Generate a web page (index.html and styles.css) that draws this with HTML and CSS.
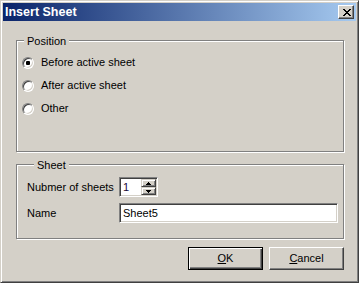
FILE: index.html
```html
<!DOCTYPE html>
<html lang="en">
<head>
    <meta charset="UTF-8">
    <title>Insert Sheet</title>
    <link rel="stylesheet" href="styles.css">
</head>
<body>
    <div class="window">
        <div class="titlebar">
            <span class="title">Insert Sheet</span>
            <span class="close-btn">
                <svg width="8" height="7" viewBox="0 0 8 7" shape-rendering="crispEdges">
                    <path d="M0 0h2v1h-2z M6 0h2v1h-2z M1 1h2v1h-2z M5 1h2v1h-2z M2 2h4v1h-4z M3 3h2v1h-2z M2 4h4v1h-4z M1 5h2v1h-2z M5 5h2v1h-2z M0 6h2v1h-2z M6 6h2v1h-2z" fill="#000"/>
                </svg>
            </span>
        </div>

        <div class="client">
            <div class="group group-position">
                <div class="group-title">Position</div>
                <div class="options">
                    <label class="option"><span class="radio checked"></span>Before active sheet</label>
                    <label class="option"><span class="radio"></span>After active sheet</label>
                    <label class="option"><span class="radio"></span>Other</label>
                </div>
            </div>

            <div class="group group-sheet">
                <div class="group-title">Sheet</div>
                <div class="field-row">
                    <span class="field-label">Nubmer of sheets</span>
                    <div class="spinbox">
                        <span class="spin-value">1</span>
                        <div class="spin-buttons">
                            <span class="spin-btn">
                                <svg width="5" height="3" viewBox="0 0 5 3" shape-rendering="crispEdges"><path d="M2 0h1v1h1v1h1v1h-5v-1h1v-1h1z" fill="#000"/></svg>
                            </span>
                            <span class="spin-btn">
                                <svg width="5" height="3" viewBox="0 0 5 3" shape-rendering="crispEdges"><path d="M0 0h5v1h-1v1h-1v1h-1v-1h-1v-1h-1z" fill="#000"/></svg>
                            </span>
                        </div>
                    </div>
                </div>
                <div class="field-row">
                    <span class="field-label">Name</span>
                    <div class="textbox">Sheet5</div>
                </div>
            </div>

            <div class="buttons">
                <button class="btn btn-default"><u>O</u>K</button>
                <button class="btn"><u>C</u>ancel</button>
            </div>
        </div>
    </div>
</body>
</html>
```

FILE: styles.css
```css
* {
    box-sizing: border-box;
    margin: 0;
    padding: 0;
}

body {
    background: #d4d0c8;
    font-family: 'Liberation Sans', Arial, sans-serif;
    font-size: 11px;
    line-height: 13px;
    color: #000;
}

.window {
    width: 359px;
    height: 283px;
    background: #d4d0c8;
    border: 1px solid;
    border-color: #d4d0c8 #404040 #404040 #d4d0c8;
    box-shadow: inset 1px 1px 0 #fff, inset -1px -1px 0 #808080;
    padding: 2px;
}

.titlebar {
    height: 18px;
    display: flex;
    align-items: center;
    justify-content: space-between;
    padding: 0 2px;
    background: linear-gradient(to right, #0a246a, #a6caf0);
}

.title {
    color: #fff;
    font-weight: bold;
    font-size: 12.5px;
    line-height: 14px;
}

.close-btn {
    width: 16px;
    height: 14px;
    display: flex;
    align-items: center;
    justify-content: center;
    padding-left: 1px;
    background: #d4d0c8;
    border: 1px solid;
    border-color: #fff #404040 #404040 #fff;
    box-shadow: inset -1px -1px 0 #808080;
}

.client {
    padding: 19px 12px 0 13px;
}

.group {
    border: 1px solid #808080;
    box-shadow: 1px 1px 0 #fff, inset 1px 1px 0 #fff;
}

.group-title {
    width: fit-content;
    margin: -6px 0 0 7px;
    padding: 0 3px;
    background: #d4d0c8;
}

.group-position {
    height: 112px;
}

.options {
    padding: 3px 0 0 5px;
}

.option {
    height: 23px;
    display: flex;
    align-items: center;
    gap: 7px;
}

.radio {
    width: 12px;
    height: 12px;
    border-radius: 50%;
    background: #fff;
    border: 1px solid;
    border-color: #808080 #fff #fff #808080;
    box-shadow: inset 1px 1px 0 #404040, inset -1px -1px 0 #d4d0c8;
    display: flex;
    align-items: center;
    justify-content: center;
}

.radio.checked::after {
    content: "";
    width: 4px;
    height: 4px;
    border-radius: 1px;
    background: #000;
}

.group-sheet {
    height: 75px;
    margin-top: 12px;
    padding: 0 0 0 10px;
}

.field-row {
    height: 20px;
    display: flex;
    align-items: center;
    margin-top: 6px;
}

.group-sheet .group-title + .field-row {
    margin-top: 5px;
}

.field-label {
    width: 92px;
}

.spinbox,
.textbox {
    height: 20px;
    background: #fff;
    border: 1px solid;
    border-color: #808080 #fff #fff #808080;
    box-shadow: inset 1px 1px 0 #404040, inset -1px -1px 0 #d4d0c8;
    padding: 2px;
    display: flex;
    align-items: center;
}

.spinbox {
    width: 39px;
    padding-right: 1px;
}

.spin-value {
    flex: 1;
    padding-left: 1px;
    color: #1a0838;
}

.spin-buttons {
    display: flex;
    flex-direction: column;
    width: 15px;
}

.spin-btn {
    height: 8px;
    display: flex;
    align-items: center;
    justify-content: center;
    background: #d4d0c8;
    border: 1px solid;
    border-color: #d4d0c8 #404040 #404040 #d4d0c8;
    box-shadow: inset 1px 1px 0 #fff, inset -1px -1px 0 #808080;
}

.textbox {
    width: 219px;
    padding-left: 3px;
}

.buttons {
    display: flex;
    justify-content: flex-end;
    gap: 6px;
    margin-top: 8px;
}

.btn {
    width: 75px;
    height: 23px;
    font: inherit;
    color: #000;
    background: #d4d0c8;
    border: 1px solid;
    border-color: #fff #404040 #404040 #fff;
    box-shadow: inset -1px -1px 0 #808080;
}

.btn-default {
    border-color: #000;
    box-shadow: inset 1px 1px 0 #fff, inset -1px -1px 0 #404040, inset -2px -2px 0 #808080;
}
```
